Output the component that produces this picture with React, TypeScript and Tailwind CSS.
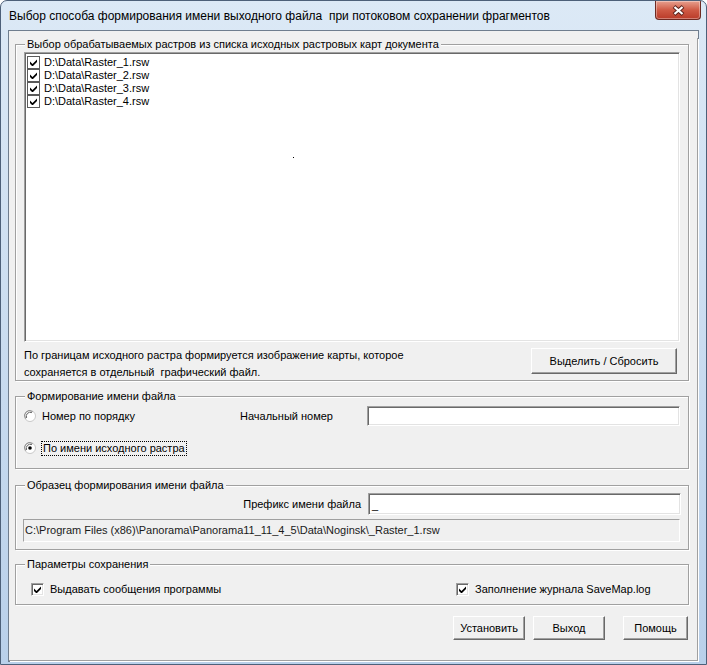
import React from "react";

const files = ["D:\\Data\\Raster_1.rsw", "D:\\Data\\Raster_2.rsw", "D:\\Data\\Raster_3.rsw", "D:\\Data\\Raster_4.rsw"];

function CheckMark() {
  return (
    <svg width="7" height="7" viewBox="0 0 7 7">
      <polygon points="0,2.5 2.5,5 7,0.5 7,3 2.5,7.5 0,5" fill="#000" />
    </svg>
  );
}

function FlatCheck() {
  return (
    <span className="flex h-[13px] w-[13px] shrink-0 items-center justify-center border border-[#5a5a5a] bg-white">
      <CheckMark />
    </span>
  );
}

function Check() {
  return (
    <span className="flex h-[13px] w-[13px] shrink-0 items-center justify-center border border-t-[#a0a0a0] border-l-[#a0a0a0] border-b-white border-r-white bg-white shadow-[inset_1px_1px_0_#696969,inset_-1px_-1px_0_#e3e3e3]">
      <CheckMark />
    </span>
  );
}

function Radio({ on }: { on?: boolean }) {
  return (
    <svg width="12" height="12" viewBox="0 0 12 12" className="shrink-0">
      <circle cx="6" cy="6" r="5.5" fill="#fff" stroke="#c8c8c8" strokeWidth="1" />
      <path d="M1.6 8.6A5 5 0 0 1 8.6 1.6" fill="none" stroke="#8a8a8a" strokeWidth="1" />
      <path d="M2.6 7.9A4 4 0 0 1 7.9 2.6" fill="none" stroke="#5e5e5e" strokeWidth="1" />
      {on && <circle cx="6" cy="6" r="1.8" fill="#000" />}
    </svg>
  );
}

function Button({ label, w }: { label: string; w: string }) {
  return (
    <button className={`${w} flex h-[24px] items-center justify-center border border-t-white border-l-white border-b-[#696969] border-r-[#696969] bg-[#f0f0f0] text-[11px] shadow-[inset_-1px_-1px_0_#a0a0a0]`}>
      {label}
    </button>
  );
}

const field =
  "h-[20px] border border-t-[#a0a0a0] border-l-[#a0a0a0] border-b-white border-r-white bg-white shadow-[inset_1px_1px_0_#696969,inset_-1px_-1px_0_#e3e3e3]";
const group =
  "ml-[6px] w-[674px] border border-[#a0a0a0] shadow-[inset_1px_1px_0_#fff,1px_1px_0_#fff]";
const legend = "ml-[9px] bg-[#f0f0f0] px-[2px] text-[11px] leading-[13px]";

export default function App() {
  return (
    <div className="flex h-[665px] w-[707px] flex-col overflow-hidden rounded-t-[7px] border border-[#4d6079] bg-gradient-to-b from-[#dce9f6] to-[#b9d0ea] font-['Liberation_Sans',Arial,sans-serif] text-black">
      {/* title bar */}
      <div className="flex h-[29px] shrink-0 items-start justify-between">
        <div className="flex h-[29px] items-center pl-[8px] text-[12px]">
          Выбор способа формирования имени выходного файла&nbsp; при потоковом сохранении фрагментов
        </div>
        <div className="mr-[5px] flex h-[19px] w-[46px] items-center justify-center rounded-b-[4px] border border-t-0 border-[#6e2a22] bg-gradient-to-b from-[#e6a08f] via-[#cf5a45] to-[#b93a28] shadow-[inset_0_0_0_1px_rgba(255,255,255,0.35)]">
          <svg width="13" height="11" viewBox="0 0 13 11">
            <path d="M2 1.5L11 9.5M11 1.5L2 9.5" stroke="#5b231c" strokeWidth="4" />
            <path d="M2.5 2L10.5 9M10.5 2L2.5 9" stroke="#fff" strokeWidth="2.2" />
          </svg>
        </div>
      </div>

      {/* client */}
      <div className="mx-[7px] mb-[7px] flex-1 border border-[#6f7d8e] bg-[#f0f0f0] text-[11px]">
        <div className="h-[623px] border-b border-r border-[#a0a0a0] shadow-[1px_1px_0_#fff]">
          {/* group 1 */}
          <fieldset className={`${group} mt-[7px] h-[343px]`}>
            <legend className={legend}>Выбор обрабатываемых растров из списка исходных растровых карт документа</legend>
            <div className="relative ml-[8px] mt-[1px] h-[290px] w-[656px] border border-t-[#a0a0a0] border-l-[#a0a0a0] border-b-white border-r-white bg-white pt-[3px] shadow-[inset_1px_1px_0_#696969,inset_-1px_-1px_0_#e3e3e3]">
              {files.map((f) => (
                <div key={f} className="flex h-[13px] items-center pl-[2px]">
                  <FlatCheck />
                  <span className="ml-[4px] leading-[13px]">{f}</span>
                </div>
              ))}
              <span className="absolute left-[268px] top-[104px] h-[1px] w-[1px] bg-black" />
            </div>
            <div className="mt-[5px] flex items-start justify-between pl-[8px] pr-[11px]">
              <div className="leading-[17px]">
                <div>По границам исходного растра формируется изображение карты, которое</div>
                <div>сохраняется в отдельный&nbsp; графический файл.</div>
              </div>
              <div className="mt-[1px]">
                <Button label="Выделить / Сбросить" w="w-[146px] h-[26px]" />
              </div>
            </div>
          </fieldset>

          {/* group 2 */}
          <fieldset className={`${group} mt-[9px] h-[79px]`}>
            <legend className={legend}>Формирование имени файла</legend>
            <div className="mt-[3px] flex h-[20px] items-center pl-[8px]">
              <div className="flex w-[216px] items-center">
                <Radio />
                <span className="ml-[6px]">Номер по порядку</span>
              </div>
              <span className="w-[127px]">Начальный номер</span>
              <div className={`${field} w-[313px]`} />
            </div>
            <div className="mt-[12px] flex h-[20px] items-center pl-[8px]">
              <Radio on />
              <span className="ml-[5px] border border-dotted border-black px-[1px] leading-[13px]">По имени исходного растра</span>
            </div>
          </fieldset>

          {/* group 3 */}
          <fieldset className={`${group} mt-[10px] h-[71px]`}>
            <legend className={`${legend} ml-[6px]`}>Образец формирования имени файла</legend>
            <div className="mt-[1px] flex h-[22px] items-center">
              <span className="w-[352px] pr-[7px] text-right">Префикс имени файла</span>
              <div className={`${field} flex h-[22px] w-[313px] items-end pb-[3px] pl-[3px] leading-[11px]`}>_</div>
            </div>
            <div className="ml-[7px] mt-[4px] flex h-[23px] w-[657px] items-center border border-t-[#a0a0a0] border-l-[#a0a0a0] border-b-white border-r-white pl-[1px] text-[#1a1a1a]">
              C:\Program Files (x86)\Panorama\Panorama11_11_4_5\Data\Noginsk\_Raster_1.rsw
            </div>
          </fieldset>

          {/* group 4 */}
          <fieldset className={`${group} mt-[8px] h-[47px]`}>
            <legend className={legend}>Параметры сохранения</legend>
            <div className="mt-[9px] flex h-[18px] items-center pl-[15px]">
              <div className="flex w-[425px] items-center">
                <Check />
                <span className="ml-[6px]">Выдавать сообщения программы</span>
              </div>
              <Check />
              <span className="ml-[6px]">Заполнение журнала SaveMap.log</span>
            </div>
          </fieldset>

          {/* buttons */}
          <div className="mt-[11px] flex pl-[444px]">
            <Button label="Установить" w="w-[72px]" />
            <div className="ml-[8px]">
              <Button label="Выход" w="w-[72px]" />
            </div>
            <div className="ml-[18px]">
              <Button label="Помощь" w="w-[65px]" />
            </div>
          </div>
        </div>
      </div>
    </div>
  );
}
